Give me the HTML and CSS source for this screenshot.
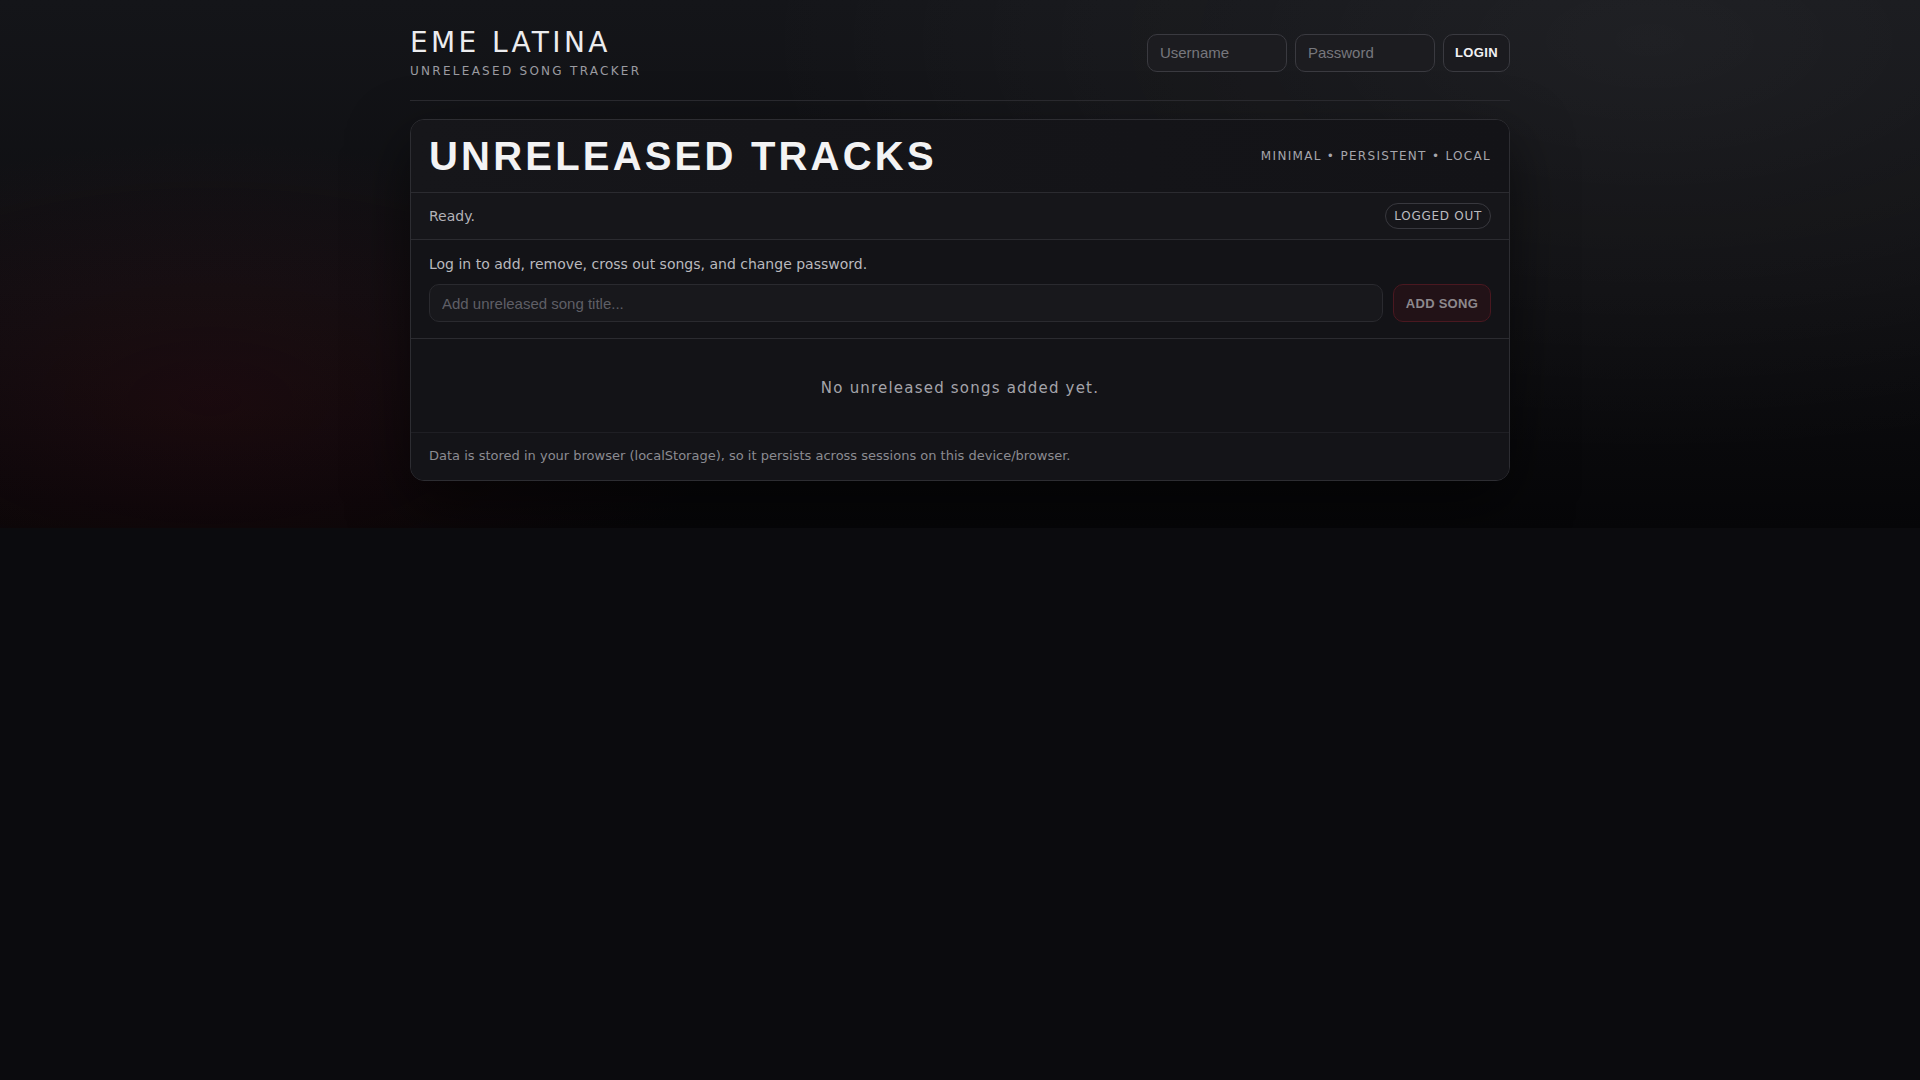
FILE: index.html
```html
<!DOCTYPE html>
<html lang="en">
<head>
    <meta charset="UTF-8">
    <meta name="viewport" content="width=device-width, initial-scale=1.0">
    <title>EME LATINA - Unreleased Tracks</title>
<link rel="stylesheet" href="styles.css">
</head>
<body>
    <div class="wrap">
        <header class="top">
            <div class="brand">
                <h1>EME LATINA</h1>
                <div class="sub">UNRELEASED SONG TRACKER</div>
            </div>
            <form class="login" onsubmit="return false">
                <input type="text" placeholder="Username">
                <input type="password" placeholder="Password">
                <button type="submit" class="btn">LOGIN</button>
            </form>
        </header>

        <main class="card">
            <div class="card-head">
                <h2>UNRELEASED TRACKS</h2>
                <div class="tagline">MINIMAL &bull; PERSISTENT &bull; LOCAL</div>
            </div>
            <div class="status">
                <span id="msg">Ready.</span>
                <span class="pill" id="state">LOGGED OUT</span>
            </div>
            <div class="add">
                <p class="hint">Log in to add, remove, cross out songs, and change password.</p>
                <div class="add-row">
                    <input type="text" class="song-input" placeholder="Add unreleased song title..." disabled>
                    <button class="btn btn-add" disabled>ADD SONG</button>
                </div>
            </div>
            <div class="list">
                <p class="empty">No unreleased songs added yet.</p>
            </div>
            <div class="foot">
                Data is stored in your browser (localStorage), so it persists across sessions on this device/browser.
            </div>
        </main>
    </div>
</body>
</html>
```

FILE: styles.css
```css
*{
    box-sizing: border-box;
    padding: 0;
    margin: 0;
}
html{
    background: #0b0b0e;
}
body{
    font-family: "DejaVu Sans", sans-serif;
    color: #e6e6e8;
    background:
        radial-gradient(ellipse 520px 260px at 210px 400px, rgba(110, 10, 22, 0.16), rgba(110, 10, 22, 0) 100%),
        radial-gradient(ellipse 900px 420px at 1650px 40px, rgba(255, 255, 255, 0.05), rgba(255, 255, 255, 0) 100%),
        linear-gradient(180deg, #141519 0%, #0e0e11 55%, #060608 100%);
}
.wrap{
    max-width: 1100px;
    margin: 0 auto;
    padding: 28px 0 47px;
}

/* header */
.top{
    display: flex;
    align-items: center;
    justify-content: space-between;
    padding-bottom: 21px;
    border-bottom: 1px solid #2b2b30;
}
h1{
    font-size: 28px;
    font-weight: 400;
    line-height: 1.1;
    letter-spacing: 0.12em;
    color: #ececee;
}
.sub{
    margin-top: 5px;
    font-size: 12px;
    line-height: 1.3;
    letter-spacing: 0.19em;
    color: #9b9ba1;
}
.login{
    display: flex;
    gap: 8px;
    margin-top: -2px;
}
input{
    font-family: "Liberation Sans", Arial, sans-serif;
    font-size: 15px;
    height: 38px;
    padding: 0 12px;
    border-radius: 10px;
    border: 1px solid #3a3a40;
    background: #1c1c20;
    color: #e6e6e8;
    outline: none;
}
input::placeholder{
    color: #77777d;
}
.login input{
    width: 140px;
}
.btn{
    font-family: "Liberation Sans", Arial, sans-serif;
    font-size: 13px;
    font-weight: 700;
    letter-spacing: 0.03em;
    height: 38px;
    padding: 0 11px;
    border-radius: 10px;
    border: 1px solid #3a3a40;
    background: #1b1b1f;
    color: #f1f1f3;
    cursor: pointer;
}

/* card */
.card{
    margin-top: 18px;
    border: 1px solid #2d2d32;
    border-radius: 14px;
    background: #131317;
    box-shadow: 0 24px 60px rgba(0, 0, 0, 0.55);
    overflow: hidden;
}
.card-head{
    display: flex;
    align-items: center;
    justify-content: space-between;
    padding: 16px 18px;
    border-bottom: 1px solid #2b2b30;
    background: linear-gradient(90deg, #16161a, #131317);
}
h2{
    font-family: "Liberation Sans", Arial, sans-serif;
    font-size: 40px;
    font-weight: 700;
    line-height: 1;
    letter-spacing: 0.08em;
    color: #f3f3f4;
}
.tagline{
    font-size: 12px;
    letter-spacing: 0.11em;
    color: #a6a6ac;
}
.status{
    display: flex;
    align-items: center;
    justify-content: space-between;
    padding: 10px 18px;
    border-bottom: 1px solid #2b2b30;
    background: #16161a;
    font-size: 14px;
    color: #b3b3b8;
}
.pill{
    font-size: 12px;
    letter-spacing: 0.06em;
    line-height: 14px;
    padding: 5px 8px;
    border: 1px solid #38383e;
    border-radius: 999px;
    color: #bcbcc0;
}
.add{
    padding: 14px 18px 16px;
    border-bottom: 1px solid #2b2b30;
}
.hint{
    font-size: 14px;
    line-height: 1.5;
    color: #b9b9be;
}
.add-row{
    display: flex;
    gap: 10px;
    margin-top: 9px;
}
.song-input{
    flex: 1;
    background: #18181c;
    border-color: #2a2a2f;
}
.song-input::placeholder{
    color: #5f5f66;
}
.btn-add{
    padding: 0 12px;
    background: #221217;
    border-color: #4a1820;
    color: #8d898d;
    letter-spacing: 0.02em;
}
.list{
    padding: 38px 18px 32px;
    border-bottom: 1px solid #1f1f24;
}
.empty{
    text-align: center;
    font-size: 15px;
    line-height: 1.5;
    letter-spacing: 0.08em;
    color: #a4a4aa;
}
.foot{
    padding: 13px 18px 15px;
    font-size: 13px;
    line-height: 1.5;
    color: #8b8b91;
    background: #141418;
}
```
